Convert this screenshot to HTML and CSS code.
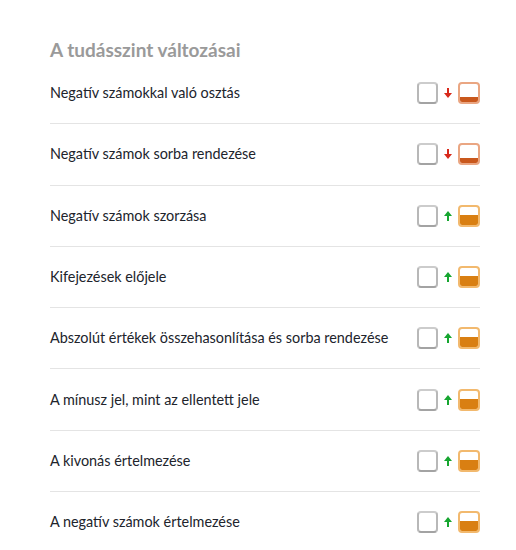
FILE: index.html
```html
<!DOCTYPE html>
<html lang="hu">
<head>
<meta charset="utf-8">
<title>A tudásszint változásai</title>
<link rel="stylesheet" href="styles.css">
</head>
<body>
<section class="panel">
  <h2 class="title">A tudásszint változásai</h2>
  <ul class="list">
    <li class="row"><span class="name">Negatív számokkal való osztás</span>
      <span class="levels"><span class="box empty"></span>
        <svg class="arrow down" viewBox="0 0 8 10"><path d="M3 0h2v5h3L4 10 0 5h3z"/></svg>
        <span class="box low"><span class="fill"></span></span></span></li>
    <li class="row"><span class="name">Negatív számok sorba rendezése</span>
      <span class="levels"><span class="box empty"></span>
        <svg class="arrow down" viewBox="0 0 8 10"><path d="M3 0h2v5h3L4 10 0 5h3z"/></svg>
        <span class="box low"><span class="fill"></span></span></span></li>
    <li class="row"><span class="name">Negatív számok szorzása</span>
      <span class="levels"><span class="box empty"></span>
        <svg class="arrow up" viewBox="0 0 8 10"><path d="M3 10h2V5h3L4 0 0 5h3z"/></svg>
        <span class="box mid"><span class="fill"></span></span></span></li>
    <li class="row"><span class="name">Kifejezések előjele</span>
      <span class="levels"><span class="box empty"></span>
        <svg class="arrow up" viewBox="0 0 8 10"><path d="M3 10h2V5h3L4 0 0 5h3z"/></svg>
        <span class="box mid"><span class="fill"></span></span></span></li>
    <li class="row"><span class="name">Abszolút értékek összehasonlítása és sorba rendezése</span>
      <span class="levels"><span class="box empty"></span>
        <svg class="arrow up" viewBox="0 0 8 10"><path d="M3 10h2V5h3L4 0 0 5h3z"/></svg>
        <span class="box mid"><span class="fill"></span></span></span></li>
    <li class="row"><span class="name">A mínusz jel, mint az ellentett jele</span>
      <span class="levels"><span class="box empty"></span>
        <svg class="arrow up" viewBox="0 0 8 10"><path d="M3 10h2V5h3L4 0 0 5h3z"/></svg>
        <span class="box mid"><span class="fill"></span></span></span></li>
    <li class="row"><span class="name">A kivonás értelmezése</span>
      <span class="levels"><span class="box empty"></span>
        <svg class="arrow up" viewBox="0 0 8 10"><path d="M3 10h2V5h3L4 0 0 5h3z"/></svg>
        <span class="box mid"><span class="fill"></span></span></span></li>
    <li class="row"><span class="name">A negatív számok értelmezése</span>
      <span class="levels"><span class="box empty"></span>
        <svg class="arrow up" viewBox="0 0 8 10"><path d="M3 10h2V5h3L4 0 0 5h3z"/></svg>
        <span class="box mid"><span class="fill"></span></span></span></li>
  </ul>
</section>
</body>
</html>
```

FILE: styles.css
```css
html, body {
  margin: 0;
  padding: 0;
  background: #ffffff;
}
body {
  font-family: Lato, "Open Sans", "Liberation Sans", sans-serif;
  color: #21242c;
}
.panel {
  width: 430px;
  padding: 38px 36px 0 50px;
}
.title {
  margin: 0 0 1px 0;
  font-size: 19px;
  line-height: 24px;
  font-weight: 700;
  color: #9a9a9a;
}
.list {
  list-style: none;
  margin: 0;
  padding: 0;
}
.row {
  display: flex;
  align-items: center;
  justify-content: space-between;
  padding: 19.15px 0;
  border-bottom: 1px solid #e4e4e4;
}
.name {
  font-size: 14.4px;
  line-height: 20px;
}
.levels {
  display: flex;
  align-items: center;
  gap: 6px;
}
.box {
  box-sizing: border-box;
  width: 22px;
  height: 22px;
  border-radius: 4px;
  border: 2px solid;
  display: flex;
  flex-direction: column;
  justify-content: flex-end;
  overflow: hidden;
  background: #ffffff;
}
.box.empty {
  width: 21px;
  border-color: #cccccc #b8b8b8 #a3a3a3 #b8b8b8;
}
.box.low {
  border-color: #eaa682;
}
.box.low .fill {
  height: 5px;
  background: #c9581d;
}
.box.mid {
  border-color: #f2b96e;
}
.box.mid .fill {
  height: 10px;
  background: #d97f12;
}
.arrow {
  width: 8px;
  height: 10px;
}
.arrow.down {
  fill: #d8291b;
}
.arrow.up {
  fill: #16a630;
}
```
